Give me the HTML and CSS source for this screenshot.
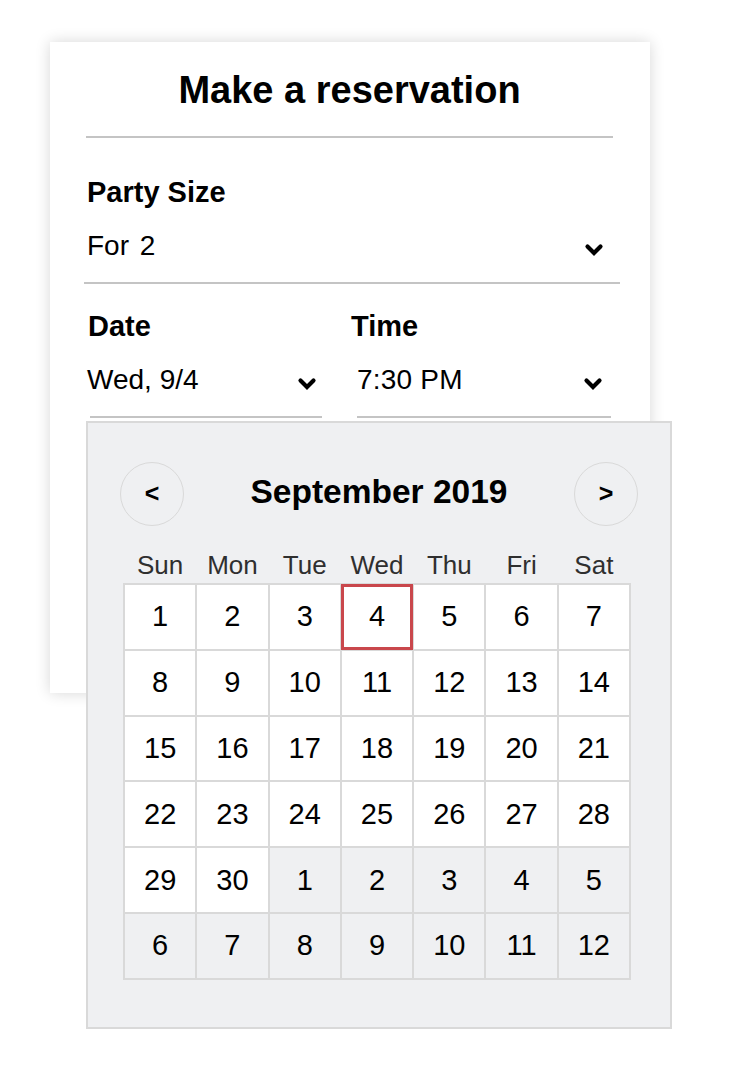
FILE: index.html
```html
<!DOCTYPE html>
<html lang="en">
<head>
<meta charset="utf-8">
<title>Make a reservation</title>
<link rel="stylesheet" href="styles.css">
</head>
<body>
<div class="page">
  <div class="card">
    <h1 class="title">Make a reservation</h1>
    <div class="rule"></div>

    <div class="field field-party">
      <div class="label">Party Size</div>
      <div class="select select-party">
        <span class="value">For 2</span>
        <svg class="chev" viewBox="0 0 20 14" aria-hidden="true"><polyline points="3.5,3.5 10,10 16.5,3.5"/></svg>
      </div>
    </div>

    <div class="row2">
      <div class="field field-date">
        <div class="label">Date</div>
        <div class="select select-date">
          <span class="value">Wed, 9/4</span>
          <svg class="chev" viewBox="0 0 20 14" aria-hidden="true"><polyline points="3.5,3.5 10,10 16.5,3.5"/></svg>
        </div>
      </div>
      <div class="field field-time">
        <div class="label">Time</div>
        <div class="select select-time">
          <span class="value">7:30 PM</span>
          <svg class="chev" viewBox="0 0 20 14" aria-hidden="true"><polyline points="3.5,3.5 10,10 16.5,3.5"/></svg>
        </div>
      </div>
    </div>
  </div>

  <div class="calendar">
    <div class="cal-head">
      <button class="nav" type="button">&lt;</button>
      <div class="month">September 2019</div>
      <button class="nav" type="button">&gt;</button>
    </div>
    <div class="weekdays">
      <span>Sun</span><span>Mon</span><span>Tue</span><span>Wed</span><span>Thu</span><span>Fri</span><span>Sat</span>
    </div>
    <div class="grid">
      <div class="day">1</div><div class="day">2</div><div class="day">3</div><div class="day selected">4</div><div class="day">5</div><div class="day">6</div><div class="day">7</div>
      <div class="day">8</div><div class="day">9</div><div class="day">10</div><div class="day">11</div><div class="day">12</div><div class="day">13</div><div class="day">14</div>
      <div class="day">15</div><div class="day">16</div><div class="day">17</div><div class="day">18</div><div class="day">19</div><div class="day">20</div><div class="day">21</div>
      <div class="day">22</div><div class="day">23</div><div class="day">24</div><div class="day">25</div><div class="day">26</div><div class="day">27</div><div class="day">28</div>
      <div class="day">29</div><div class="day">30</div><div class="day other">1</div><div class="day other">2</div><div class="day other">3</div><div class="day other">4</div><div class="day other">5</div>
      <div class="day other">6</div><div class="day other">7</div><div class="day other">8</div><div class="day other">9</div><div class="day other">10</div><div class="day other">11</div><div class="day other">12</div>
    </div>
  </div>
</div>
</body>
</html>
```
FILE: styles.css
```css
* { box-sizing: border-box; }

html, body {
  margin: 0;
  padding: 0;
  background: #ffffff;
}

body {
  font-family: "Liberation Sans", Arial, sans-serif;
  color: #000;
}

.page {
  padding: 42px 0 51px 50px;
}

.card {
  width: 600px;
  height: 651px;
  background: #fff;
  box-shadow: 0 0 14px rgba(0, 0, 0, 0.16);
  padding: 26px 37px 0 36px;
}

.title {
  margin: 0;
  font-size: 38px;
  line-height: 44px;
  font-weight: 700;
  text-align: center;
}

.rule {
  margin-top: 24px;
  height: 2px;
  background: #c4c4c4;
}

.label {
  font-size: 29px;
  line-height: 34px;
  font-weight: 700;
  padding-left: 1px;
}

.select {
  display: flex;
  align-items: center;
  justify-content: space-between;
  margin-top: 20px;
  padding-bottom: 19px;
  border-bottom: 2px solid #c4c4c4;
}

.value {
  font-size: 28px;
  line-height: 34px;
}

.chev {
  width: 20px;
  height: 14px;
  fill: none;
  stroke: #000;
  stroke-width: 4.2;
  stroke-linecap: round;
  stroke-linejoin: miter;
  margin-top: 8px;
  flex: none;
}

.field-party {
  margin-top: 37px;
  margin-left: -2px;
  margin-right: -7px;
}

.field-party .label { padding-left: 3px; }
.field-party .value { margin-left: 3px; word-spacing: 3px; }
.select-party { padding-right: 16px; }

.row2 {
  display: flex;
  margin-top: 25px;
  margin-left: 1px;
}

.field-date { width: 235px; }
.select-date { margin-left: 3px; padding-right: 5px; }
.select-date .value { margin-left: -3px; }

.field-time { width: 261px; margin-left: 28px; }
.select-time { margin-left: 7px; padding-right: 8px; }
.select-time .value { letter-spacing: 0.2px; }

/* calendar popup */
.calendar {
  position: relative;
  z-index: 1;
  margin-top: -272px;
  margin-left: 36px;
  width: 586px;
  height: 608px;
  background: #eff0f2;
  border: 2px solid #d9d9d9;
  padding: 39px 32px 0 35px;
}

.cal-head {
  display: flex;
  align-items: center;
  justify-content: space-between;
  margin-left: -3px;
}

.nav {
  width: 64px;
  height: 64px;
  border-radius: 50%;
  border: 1.5px solid #d9d9d9;
  background: transparent;
  font-family: "Liberation Sans", Arial, sans-serif;
  font-weight: 700;
  font-size: 25px;
  line-height: 1;
  color: #000;
  padding: 0 0 2px 0;
  display: flex;
  align-items: center;
  justify-content: center;
}

.month {
  font-size: 33.5px;
  font-weight: 700;
  line-height: 40px;
  margin-top: -5px;
}

.weekdays {
  width: 508px;
  display: grid;
  grid-template-columns: repeat(7, 1fr);
  column-gap: 2px;
  padding: 0 2px;
  margin-top: 24px;
  font-size: 26px;
  line-height: 30px;
  color: #2f2f2f;
  text-align: center;
}

.grid {
  width: 508px;
  margin-top: 3px;
  display: grid;
  grid-template-columns: repeat(7, 1fr);
  grid-auto-rows: 63.8px;
  gap: 2px;
  padding: 2px;
  background: #d9d9d9;
}

.day {
  background: #fff;
  display: flex;
  align-items: center;
  justify-content: center;
  font-size: 29px;
}

.day.other {
  background: #eff0f2;
}

.day.selected {
  box-shadow: 0 0 0 1px #c9474c, inset 0 0 0 2px #c9474c;
}
```
